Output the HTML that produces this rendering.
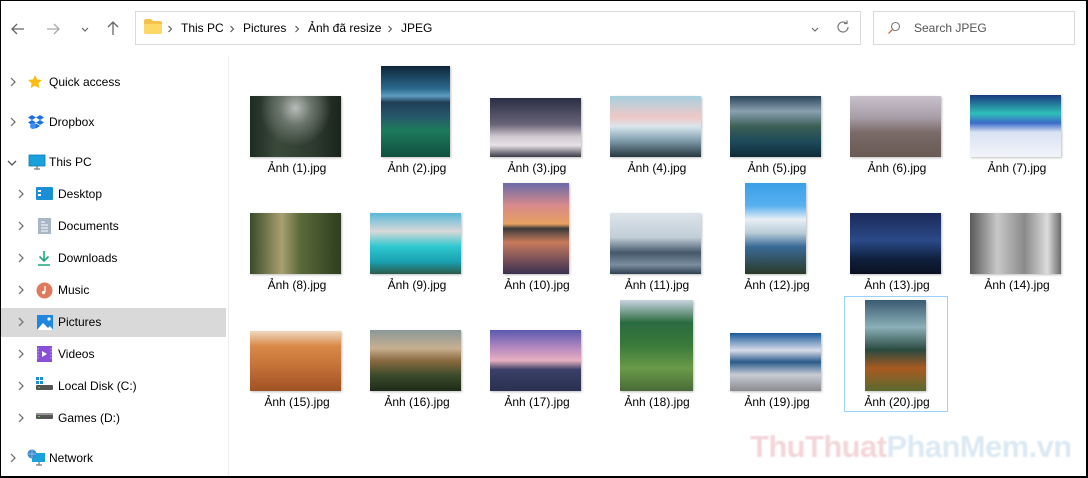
<!DOCTYPE html>
<html><head><meta charset="utf-8"><style>
*{margin:0;padding:0;box-sizing:border-box}
body{width:1088px;height:478px;overflow:hidden;background:#000;font-family:"Segoe UI","Liberation Sans",sans-serif;font-size:12px;color:#000}
#win{position:absolute;left:1px;top:1px;width:1085px;height:475px;background:#fff;overflow:hidden}
.a{position:absolute}
.box{position:absolute;border:1px solid #d9d9d9;background:#fff}
.crumb{position:absolute;top:20px;font-size:12px}
.sep{position:absolute;top:24px}
.side{position:absolute;font-size:12px;white-space:nowrap}
.chev{position:absolute}
.th{position:absolute;box-shadow:1px 1px 2px rgba(0,0,0,.25)}
.lb{position:absolute;width:110px;text-align:center;font-size:12px}
</style></head><body><div id="win">
<svg width="0" height="0" style="position:absolute"><defs><path id="cv" d="M2 1l4 4-4 4" stroke="#777" stroke-width="1.3" fill="none"/><path id="sp" d="M1.5 1l3 3-3 3" stroke="#555" stroke-width="1.1" fill="none"/></defs></svg>
<!-- nav buttons -->
<svg class="a" style="left:8px;top:19px" width="18" height="18" viewBox="0 0 18 18"><path d="M15 9H3M8 4L3 9l5 5" stroke="#666" stroke-width="1.3" fill="none"/></svg>
<svg class="a" style="left:43px;top:19px" width="18" height="18" viewBox="0 0 18 18"><path d="M3 9h12M10 4l5 5-5 5" stroke="#aaa" stroke-width="1.3" fill="none"/></svg>
<svg class="a" style="left:78px;top:22px" width="12" height="12" viewBox="0 0 12 12"><path d="M3 5l3 3 3-3" stroke="#666" stroke-width="1.2" fill="none"/></svg>
<svg class="a" style="left:103px;top:18px" width="18" height="18" viewBox="0 0 18 18"><path d="M9 16V3M4 8l5-5 5 5" stroke="#666" stroke-width="1.3" fill="none"/></svg>
<div class="box" style="left:134px;top:10px;width:726px;height:34px"></div>
<svg class="a" style="left:143px;top:18px" width="18" height="15" viewBox="0 0 18 15"><path d="M0 2q0-2 2-2h5l2 2h7q2 0 2 2v9q0 2-2 2H2q-2 0-2-2z" fill="#f5c14a"/><path d="M0 5h18v8q0 2-2 2H2q-2 0-2-2z" fill="#fdd867"/></svg>
<svg class="sep" style="left:166px" width="7" height="8"><use href="#sp"/></svg>
<span class="crumb" style="left:180px">This PC</span>
<svg class="sep" style="left:228px" width="7" height="8"><use href="#sp"/></svg>
<span class="crumb" style="left:242px">Pictures</span>
<svg class="sep" style="left:293px" width="7" height="8"><use href="#sp"/></svg>
<span class="crumb" style="left:307px">Ảnh đã resize</span>
<svg class="sep" style="left:386px" width="7" height="8"><use href="#sp"/></svg>
<span class="crumb" style="left:400px">JPEG</span>
<svg class="a" style="left:808px;top:22px" width="12" height="12" viewBox="0 0 12 12"><path d="M3 5l3 3 3-3" stroke="#666" stroke-width="1.1" fill="none"/></svg>
<svg class="a" style="left:834px;top:18px" width="16" height="16" viewBox="0 0 16 16"><path d="M13 8a5 5 0 1 1-1.6-3.7M12 1.5v3h-3" stroke="#777" stroke-width="1.2" fill="none"/></svg>
<div class="box" style="left:872px;top:10px;width:202px;height:34px"></div>
<svg class="a" style="left:886px;top:20px" width="14" height="14" viewBox="0 0 14 14"><circle cx="8.5" cy="5.5" r="4" stroke="#777" stroke-width="1.1" fill="none"/><path d="M5.5 8.5L1.5 12.5" stroke="#c06030" stroke-width="1.2"/></svg>
<span class="a" style="left:913px;top:20px;color:#555">Search JPEG</span>
<!-- divider -->
<div class="a" style="left:227px;top:55px;width:1px;height:420px;background:#eee"></div>
<!-- sidebar -->
<div class="a" style="left:0;top:307px;width:225px;height:29px;background:#d9d9d9"></div>
<svg class="chev" style="left:8px;top:76px" width="8" height="10"><use href="#cv"/></svg>
<svg class="a" style="left:26px;top:73px" width="16" height="16" viewBox="0 0 16 16"><path d="M8 1l2.1 4.4 4.8.6-3.5 3.3.9 4.8L8 11.8l-4.3 2.3.9-4.8L1.1 6l4.8-.6z" fill="#fbbd13"/></svg>
<span class="side" style="left:48px;top:74px">Quick access</span>
<svg class="chev" style="left:8px;top:116px" width="8" height="10"><use href="#cv"/></svg>
<svg class="a" style="left:26px;top:113px" width="18" height="16" viewBox="0 0 18 16"><path d="M5 1l4 2.5L5 6 1 3.5zM13 1l4 2.5L13 6 9 3.5zM5 6l4 2.5L5 11 1 8.5zM13 6l4 2.5-4 2.5-4-2.5zM5 12l4-2.5 4 2.5-4 2.5z" fill="#1e6fe0"/><circle cx="6" cy="12" r="3" fill="#3d8ef5"/></svg>
<span class="side" style="left:48px;top:114px">Dropbox</span>
<svg class="a" style="left:5px;top:156px" width="12" height="12" viewBox="0 0 12 12"><path d="M2 4l4 4 4-4" stroke="#555" stroke-width="1.3" fill="none"/></svg>
<svg class="a" style="left:27px;top:153px" width="18" height="16" viewBox="0 0 18 16"><rect x="1" y="1" width="16" height="11" fill="#1aa1dc"/><rect x="1" y="1" width="16" height="11" fill="none" stroke="#0b7ab5" stroke-width=".8"/><path d="M6 15h6M9 12v3" stroke="#777" stroke-width="1.3"/></svg>
<span class="side" style="left:48px;top:154px">This PC</span>
<svg class="chev" style="left:16px;top:188px" width="8" height="10"><use href="#cv"/></svg>
<svg class="a" style="left:35px;top:186px" width="17" height="14" viewBox="0 0 17 14"><rect x="0" y="0" width="17" height="13" rx="1" fill="#1a8fd6"/><rect x="2" y="3" width="3" height="2" fill="#fff"/><rect x="2" y="7" width="3" height="2" fill="#fff"/></svg>
<span class="side" style="left:57px;top:186px">Desktop</span>
<svg class="chev" style="left:16px;top:220px" width="8" height="10"><use href="#cv"/></svg>
<svg class="a" style="left:37px;top:217px" width="13" height="16" viewBox="0 0 13 16"><rect width="13" height="16" fill="#a9b6c6"/><path d="M3 4h4M3 7h7M3 10h7M3 13h7" stroke="#fff"/></svg>
<span class="side" style="left:57px;top:218px">Documents</span>
<svg class="chev" style="left:16px;top:252px" width="8" height="10"><use href="#cv"/></svg>
<svg class="a" style="left:36px;top:249px" width="14" height="16" viewBox="0 0 14 16"><path d="M7 1v10M2.5 6.5L7 11l4.5-4.5M1 15h12" stroke="#21a584" stroke-width="1.6" fill="none"/></svg>
<span class="side" style="left:57px;top:250px">Downloads</span>
<svg class="chev" style="left:16px;top:284px" width="8" height="10"><use href="#cv"/></svg>
<svg class="a" style="left:35px;top:281px" width="17" height="17" viewBox="0 0 17 17"><circle cx="8.5" cy="8.5" r="8" fill="#e07a5f"/><path d="M9 4v6" stroke="#fff" stroke-width="1.3"/><circle cx="7.6" cy="10.5" r="1.6" fill="#fff"/></svg>
<span class="side" style="left:57px;top:282px">Music</span>
<svg class="chev" style="left:16px;top:316px" width="8" height="10"><use href="#cv"/></svg>
<svg class="a" style="left:36px;top:314px" width="16" height="15" viewBox="0 0 16 15"><rect width="16" height="15" fill="#1f87e0"/><path d="M0 15L6 8l5 5 2-2 3 4z" fill="#fff"/><circle cx="12" cy="4" r="1.6" fill="#fff"/></svg>
<span class="side" style="left:57px;top:314px">Pictures</span>
<svg class="chev" style="left:16px;top:348px" width="8" height="10"><use href="#cv"/></svg>
<svg class="a" style="left:36px;top:345px" width="15" height="16" viewBox="0 0 15 16"><rect width="15" height="16" fill="#8a4fd8"/><path d="M5 5l5 3-5 3z" fill="#fff"/><path d="M1 2v12M14 2v12" stroke="#c9a8f3" stroke-dasharray="1.5 1.5"/></svg>
<span class="side" style="left:57px;top:346px">Videos</span>
<svg class="chev" style="left:16px;top:380px" width="8" height="10"><use href="#cv"/></svg>
<svg class="a" style="left:35px;top:376px" width="17" height="14" viewBox="0 0 17 14"><rect x="0" y="0" width="3" height="3" fill="#1a8fd6"/><rect x="4" y="0" width="3" height="3" fill="#1a8fd6"/><rect x="0" y="4" width="3" height="3" fill="#1a8fd6"/><rect x="4" y="4" width="3" height="3" fill="#1a8fd6"/><rect x="0" y="8" width="17" height="5" rx="1" fill="#555"/><rect x="2" y="10" width="2" height="1" fill="#5c5"/></svg>
<span class="side" style="left:57px;top:378px">Local Disk (C:)</span>
<svg class="chev" style="left:16px;top:412px" width="8" height="10"><use href="#cv"/></svg>
<svg class="a" style="left:35px;top:412px" width="17" height="7" viewBox="0 0 17 7"><rect width="17" height="6" rx="1" fill="#555"/><rect x="0" y="0" width="17" height="2" fill="#999"/><rect x="2" y="3" width="2" height="1" fill="#5c5"/></svg>
<span class="side" style="left:57px;top:410px">Games (D:)</span>
<svg class="chev" style="left:8px;top:452px" width="8" height="10"><use href="#cv"/></svg>
<svg class="a" style="left:26px;top:448px" width="19" height="18" viewBox="0 0 19 18"><rect x="5" y="4" width="13" height="9" fill="#1aa1dc"/><path d="M9 16h6M12 13v3" stroke="#777" stroke-width="1.2"/><circle cx="5" cy="5" r="4.5" fill="#3a88c9"/><path d="M1 5h8M5 1v8" stroke="#9fd0f0" stroke-width=".7"/></svg>
<span class="side" style="left:48px;top:450px">Network</span>
<!-- selection -->
<div class="a" style="left:843px;top:295px;width:104px;height:116px;border:1px solid #99d1ff"></div>
<!-- row 1 -->
<div class="th" style="left:249px;top:95px;width:91px;height:61px;background:radial-gradient(ellipse at 50% 20%,#b8bdbb 0,#6a746b 25%,transparent 55%),linear-gradient(90deg,#1e2b22,#3a4a3a 30%,#2e3a2e 70%,#1a241c)"></div>
<div class="th" style="left:380px;top:65px;width:69px;height:91px;background:linear-gradient(180deg,#0e2538 0,#2b6a8e 25%,#5f9cc0 33%,#1e3e55 40%,#27566b 55%,#1d7a5b 70%,#10503f 100%)"></div>
<div class="th" style="left:489px;top:97px;width:91px;height:59px;background:linear-gradient(180deg,#2a2e44 0,#6a6478 45%,#cfc8cf 65%,#e8e2e6 80%,#3a3a48 100%)"></div>
<div class="th" style="left:609px;top:95px;width:91px;height:61px;background:linear-gradient(180deg,#a8d0df 0,#f0c8c8 35%,#d8e6ec 50%,#8aa8b8 70%,#26363e 100%)"></div>
<div class="th" style="left:729px;top:95px;width:91px;height:61px;background:linear-gradient(180deg,#2a4458 0,#8aa0b0 25%,#3b5f55 50%,#1d4a5a 75%,#0f2a38 100%)"></div>
<div class="th" style="left:849px;top:95px;width:91px;height:61px;background:linear-gradient(180deg,#c8c0cc 0,#a89ea8 35%,#7a6a68 60%,#6a5a55 100%)"></div>
<div class="th" style="left:969px;top:94px;width:91px;height:62px;background:linear-gradient(180deg,#1a3a80 0,#2ec0b8 30%,#3a6ac8 45%,#d8e2f2 60%,#f2f4fa 100%)"></div>
<div class="lb" style="left:241px;top:160px">Ảnh (1).jpg</div>
<div class="lb" style="left:361px;top:160px">Ảnh (2).jpg</div>
<div class="lb" style="left:481px;top:160px">Ảnh (3).jpg</div>
<div class="lb" style="left:601px;top:160px">Ảnh (4).jpg</div>
<div class="lb" style="left:721px;top:160px">Ảnh (5).jpg</div>
<div class="lb" style="left:841px;top:160px">Ảnh (6).jpg</div>
<div class="lb" style="left:961px;top:160px">Ảnh (7).jpg</div>
<!-- row 2 -->
<div class="th" style="left:249px;top:212px;width:91px;height:61px;background:linear-gradient(90deg,#3a4a2a,#a8a070 35%,#5a6a3a 55%,#2e3e20 100%)"></div>
<div class="th" style="left:369px;top:212px;width:91px;height:61px;background:linear-gradient(180deg,#5ab8d8 0,#d8d8d8 30%,#2ec8d0 55%,#1aa0b0 80%,#2a5a4a 100%)"></div>
<div class="th" style="left:502px;top:182px;width:66px;height:91px;background:linear-gradient(180deg,#6a6aa8 0,#d88a8a 25%,#e8a060 45%,#3a3a3a 50%,#c87a5a 65%,#8a5a5a 80%,#3a3050 100%)"></div>
<div class="th" style="left:609px;top:212px;width:91px;height:61px;background:linear-gradient(180deg,#dde4ea 0,#c2ced8 40%,#44586a 65%,#7a8ea0 85%,#2e4050 100%)"></div>
<div class="th" style="left:744px;top:182px;width:61px;height:91px;background:linear-gradient(180deg,#3aa0e8 0,#58b0f0 25%,#e8eef4 40%,#b8ccd8 55%,#3a6a98 70%,#2a3a28 100%)"></div>
<div class="th" style="left:849px;top:212px;width:91px;height:61px;background:linear-gradient(180deg,#1a2a58 0,#2a4a88 45%,#10203e 75%,#0a1020 100%)"></div>
<div class="th" style="left:969px;top:212px;width:91px;height:61px;background:linear-gradient(90deg,#5a5a5a,#c8c8c8 30%,#8a8a8a 60%,#dcdcdc 85%,#6a6a6a)"></div>
<div class="lb" style="left:241px;top:277px">Ảnh (8).jpg</div>
<div class="lb" style="left:361px;top:277px">Ảnh (9).jpg</div>
<div class="lb" style="left:481px;top:277px">Ảnh (10).jpg</div>
<div class="lb" style="left:601px;top:277px">Ảnh (11).jpg</div>
<div class="lb" style="left:721px;top:277px">Ảnh (12).jpg</div>
<div class="lb" style="left:841px;top:277px">Ảnh (13).jpg</div>
<div class="lb" style="left:961px;top:277px">Ảnh (14).jpg</div>
<!-- row 3 -->
<div class="th" style="left:249px;top:330px;width:91px;height:60px;background:linear-gradient(180deg,#f0d8c0 0,#d88a48 25%,#c8743a 55%,#a05224 100%)"></div>
<div class="th" style="left:369px;top:329px;width:91px;height:61px;background:linear-gradient(180deg,#8a9898 0,#c8b090 30%,#8a6a40 50%,#3a4a2a 75%,#1e2a18 100%)"></div>
<div class="th" style="left:489px;top:329px;width:91px;height:61px;background:linear-gradient(180deg,#5a5ab0 0,#b88ac0 30%,#e8b0c0 50%,#3a4068 65%,#2a3050 100%)"></div>
<div class="th" style="left:619px;top:299px;width:73px;height:91px;background:linear-gradient(180deg,#c8d4e0 0,#2a6a40 25%,#3a7a3a 50%,#6a9a48 75%,#4a6a38 100%)"></div>
<div class="th" style="left:729px;top:332px;width:91px;height:58px;background:linear-gradient(180deg,#1a5a9a 0,#d8dcea 30%,#2a5a8a 50%,#c8ccd4 72%,#8a8a90 100%)"></div>
<div class="th" style="left:864px;top:299px;width:61px;height:91px;background:linear-gradient(180deg,#3a5a70 0,#8ab0b8 30%,#2a4a40 55%,#a85a20 75%,#5a6a30 100%)"></div>
<div class="lb" style="left:241px;top:394px">Ảnh (15).jpg</div>
<div class="lb" style="left:361px;top:394px">Ảnh (16).jpg</div>
<div class="lb" style="left:481px;top:394px">Ảnh (17).jpg</div>
<div class="lb" style="left:601px;top:394px">Ảnh (18).jpg</div>
<div class="lb" style="left:721px;top:394px">Ảnh (19).jpg</div>
<div class="lb" style="left:841px;top:394px">Ảnh (20).jpg</div>
<!-- watermark -->
<div class="a" style="left:749px;top:428px;font-size:31px;font-weight:bold;font-family:'Liberation Sans',sans-serif;filter:blur(.8px);letter-spacing:-.6px;white-space:nowrap"><span style="color:#f4d6da">ThuThuat</span><span style="color:#dce9f3">PhanMem.vn</span></div>
</div></body></html>
